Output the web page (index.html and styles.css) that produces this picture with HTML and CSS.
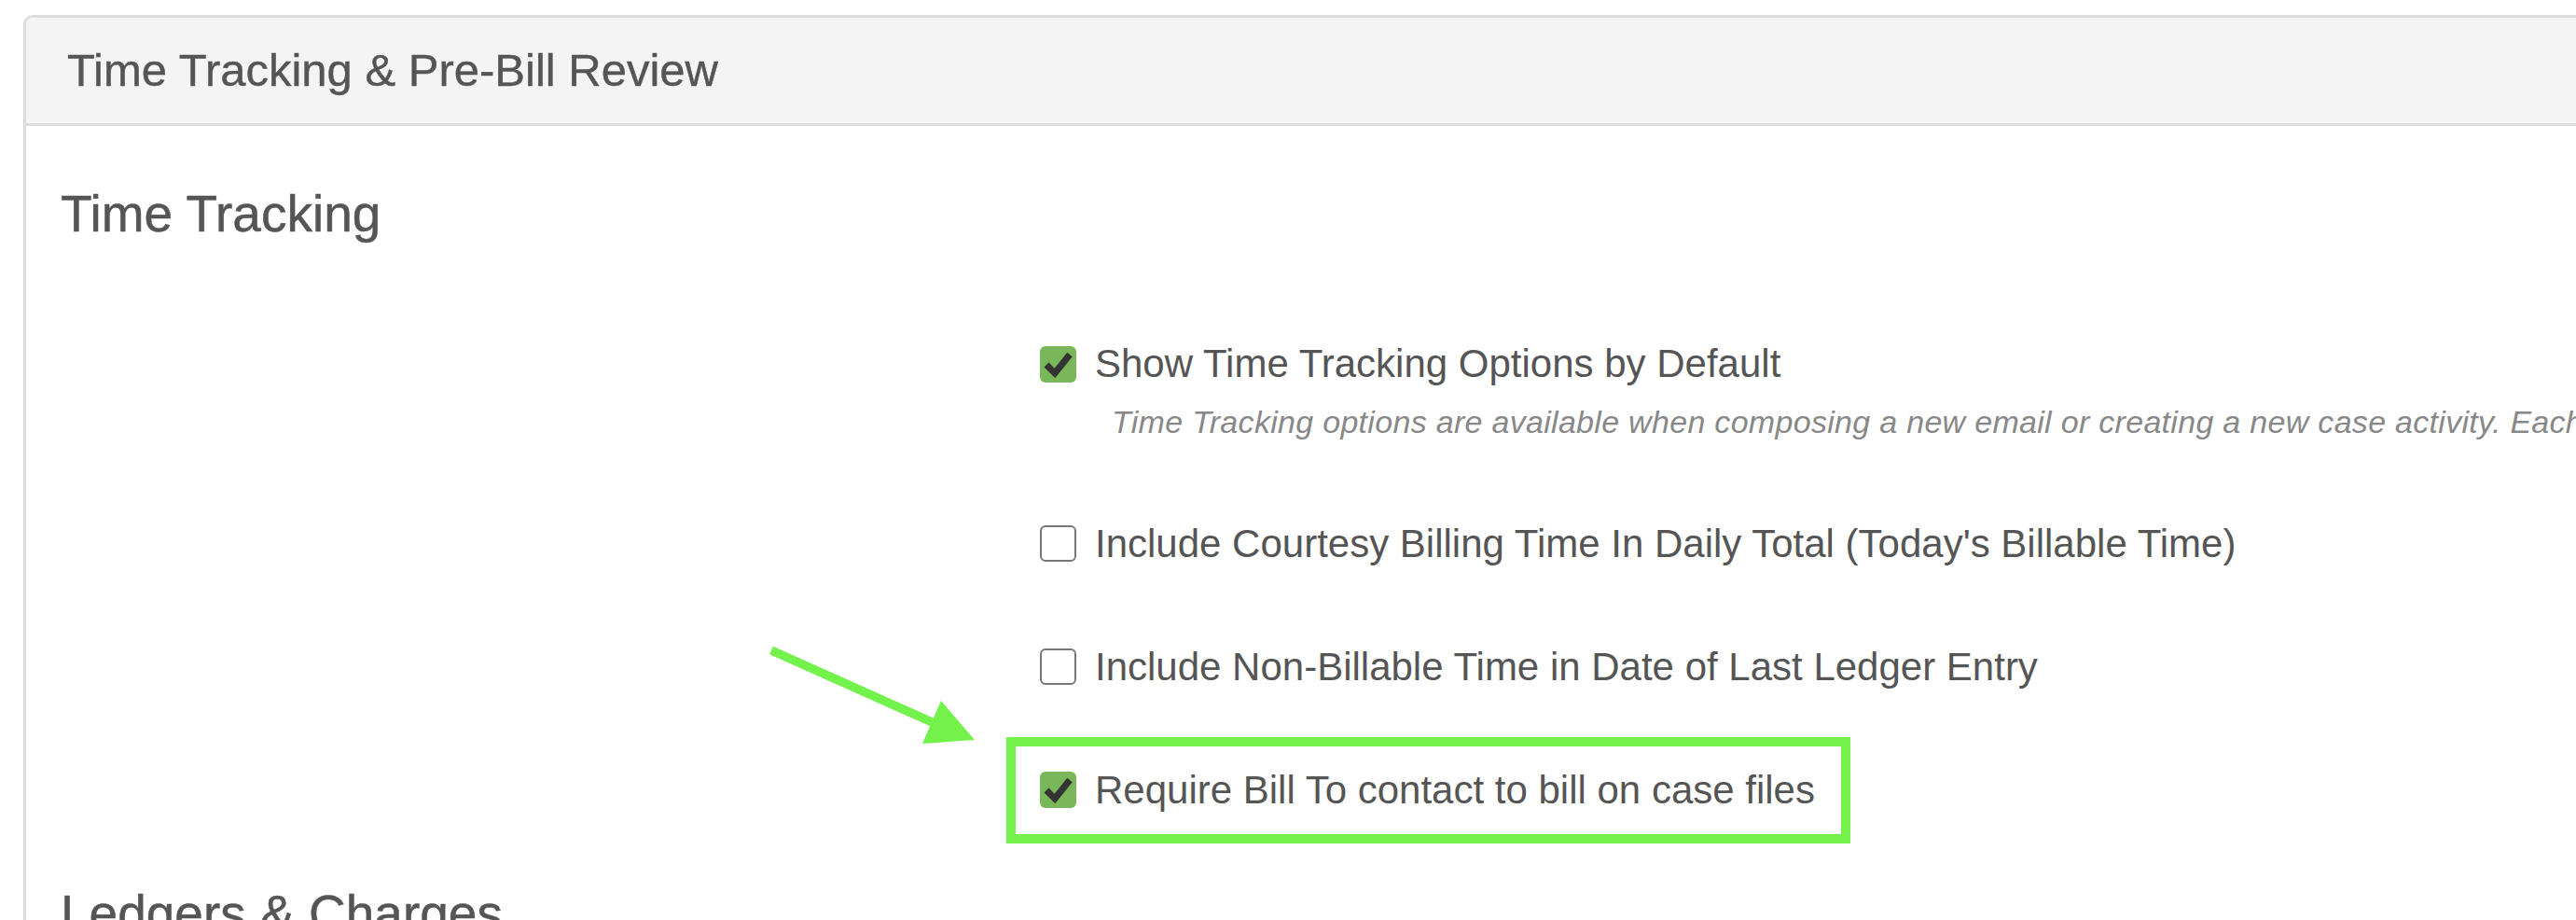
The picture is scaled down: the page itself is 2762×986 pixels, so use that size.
FILE: index.html
```html
<!DOCTYPE html>
<html lang="en">
<head>
<meta charset="UTF-8">
<meta name="viewport" content="width=device-width, initial-scale=1.0">
<title>Time Tracking &amp; Pre-Bill Review</title>
<link rel="stylesheet" href="styles.css">
</head>
<body>
<div class="panel">
    <div class="panel-heading">Time Tracking &amp; Pre-Bill Review</div>
    <div class="panel-body">
        <h3 class="section-title">Time Tracking</h3>
        <div class="options">
            <div class="option-group first">
                <label class="option">
                    <span class="box checked">
                        <svg viewBox="0 0 39 39" width="39" height="39"><path d="M7 20 L16 29 L32 9" fill="none" stroke="#333" stroke-width="7"/></svg>
                    </span>
                    <span class="option-text">Show Time Tracking Options by Default</span>
                </label>
                <p class="help">Time Tracking options are available when composing a new email or creating a new case activity. Each option can be changed before saving.</p>
            </div>
            <div class="option-group">
                <label class="option">
                    <span class="box"></span>
                    <span class="option-text">Include Courtesy Billing Time In Daily Total (Today's Billable Time)</span>
                </label>
            </div>
            <div class="option-group">
                <label class="option">
                    <span class="box"></span>
                    <span class="option-text">Include Non-Billable Time in Date of Last Ledger Entry</span>
                </label>
            </div>
            <div class="option-group last">
                <div class="highlight">
                    <label class="option">
                        <span class="box checked">
                            <svg viewBox="0 0 39 39" width="39" height="39"><path d="M7 20 L16 29 L32 9" fill="none" stroke="#333" stroke-width="7"/></svg>
                        </span>
                        <span class="option-text">Require Bill To contact to bill on case files</span>
                    </label>
                </div>
            </div>
        </div>
        <h3 class="section-title">Ledgers &amp; Charges</h3>
    </div>
</div>

<!-- annotation arrow drawn over the page -->
<svg class="arrow" width="240" height="130" viewBox="0 0 240 130">
    <line x1="7" y1="17" x2="186" y2="97" stroke="#74f24c" stroke-width="9.5"/>
    <polygon points="189,71 169,117 225,113" fill="#74f24c"/>
</svg>
</body>
</html>
```

FILE: styles.css
```css
body {
    margin: 0;
    font-family: "Liberation Sans", Arial, sans-serif;
    color: #555;
    background-color: #fff;
    overflow: hidden;
    position: relative;
    height: 986px;
}
.panel {
    margin: 16px 0 0 25px;
    width: 2900px;
    border: 3px solid #ddd;
    border-right: none;
    border-radius: 10px 0 0 0;
    background-color: #fff;
}
.panel-heading {
    height: 113px;
    line-height: 113px;
    padding-left: 44px;
    font-size: 49px;
    background-color: #f4f4f4;
    border-bottom: 3px solid #ddd;
    border-radius: 8px 0 0 0;
    -webkit-text-stroke: 0.4px #555;
}
.panel-body {
    padding: 65px 0 0 37px;
}
.section-title {
    margin: 0;
    font-size: 55px;
    font-weight: normal;
    line-height: 1.08;
    -webkit-text-stroke: 0.5px #555;
}
.options {
    margin: 108px 0 80px 1050px;
}
.option-group {
    margin-bottom: 86px;
}
.option-group.first {
    margin-bottom: 83px;
}
.option-group.last {
    margin-bottom: 0;
}
.option {
    display: flex;
    align-items: center;
    gap: 20px;
    height: 46px;
}
.option-text {
    font-size: 42px;
    line-height: 46px;
    white-space: nowrap;
}
.box {
    width: 35px;
    height: 35px;
    border: 2px solid #777;
    border-radius: 6px;
    flex-shrink: 0;
}
.box.checked {
    width: 39px;
    height: 39px;
    border: none;
    background-color: #7ab65a;
}
.box svg {
    display: block;
}
.help {
    margin: 16px 0 0 77px;
    font-size: 34px;
    letter-spacing: 0.3px;
    line-height: 1.4;
    font-style: italic;
    color: #888;
    white-space: nowrap;
}
.highlight {
    display: inline-block;
    margin: -34px 0 -34px -36px;
    padding: 24px 28px 24px 26px;
    border: 10px solid #74f24c;
}
.arrow {
    position: absolute;
    left: 820px;
    top: 680px;
}
```
